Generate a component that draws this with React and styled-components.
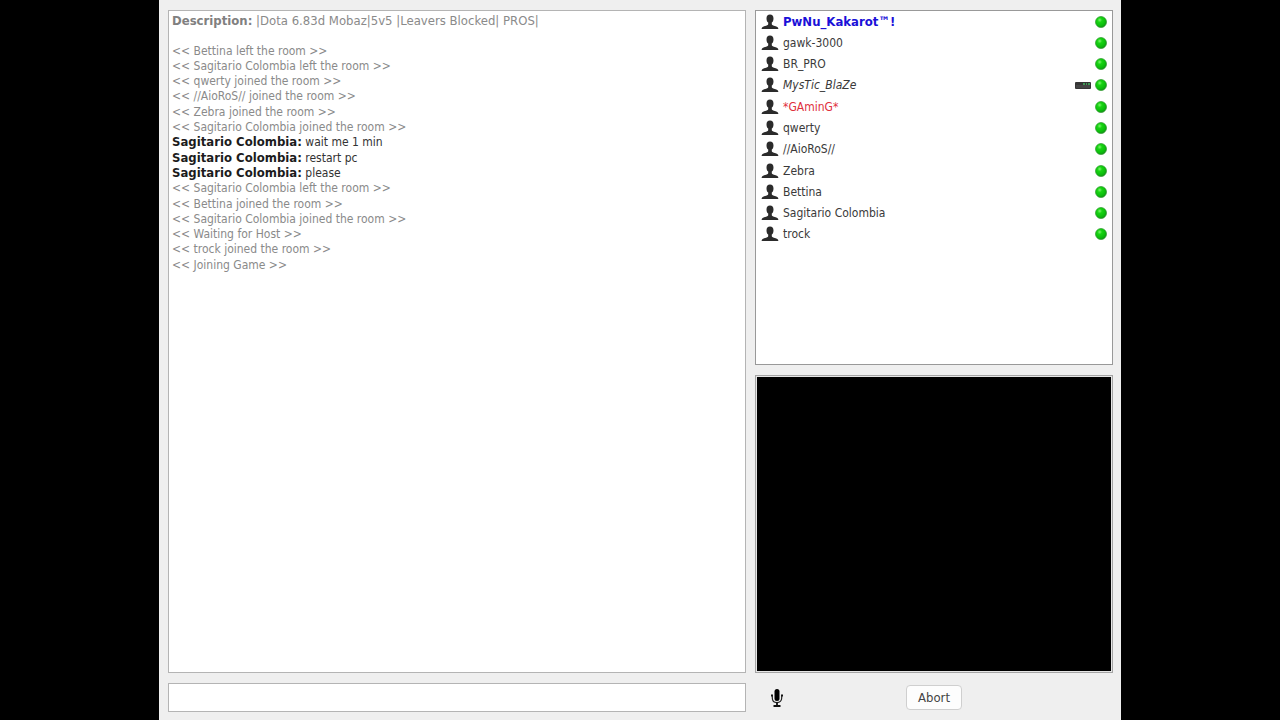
import React, { useState } from 'react'
import styled, { createGlobalStyle } from 'styled-components';

const GlobalStyle = createGlobalStyle`
* {
  box-sizing: border-box;
}
body {
  margin: 0;
  background: #000;
  color: #333;
  font-family: "DejaVu Sans Condensed", "DejaVu Sans", sans-serif;
  font-size: 12px;
}
`;

const Window = styled.div`
min-height: 100vh;
margin: 0 159px;
padding: 10px 8px 8px 9px;
background-color: #efefef;
display: grid;
grid-template-columns: 578fr 358fr;
grid-template-rows: 1fr 29px;
gap: 10px 9px;
`;

const Log = styled.main`
padding: 2px 3px;
background-color: white;
border: 1px solid #b4b4b4;
`;

const Lines = styled.div`
display: grid;
grid-auto-rows: 1fr;
height: 260px;
`;

const Line = styled.p`
margin: 0;
line-height: 15px;
white-space: pre;
font-size: ${props => props.$heading ? "13px" : "12px"};
color: ${props => props.$notice ? "#8a8a8a" : "#333"};
`;

const Author = styled.b`
font-size: 13px;
line-height: 1;
color: ${props => props.$muted ? "#808080" : "#1c1c1c"};
`;

const Side = styled.aside`
display: grid;
grid-template-rows: 355fr 298fr;
gap: 10px;
`;

const Users = styled.section`
padding: 0 5px;
background-color: white;
border: 1px solid #999;
`;

const UserList = styled.ul`
display: grid;
grid-auto-rows: 1fr;
height: 234px;
margin: 0;
padding: 0;
list-style: none;
`;

const User = styled.li`
display: flex;
align-items: center;
gap: 4px;
`;

const Name = styled.span`
flex: 1;
line-height: 20px;
color: ${props => props.$color || "#3a3a3a"};
font-size: ${props => props.$bold ? "13px" : "12px"};
font-weight: ${props => props.$bold ? 700 : 400};
font-style: ${props => props.$italic ? "italic" : "normal"};
`;

const Ad = styled.div`
background-color: black;
border: 1px solid #a5a5a5;
box-shadow: inset 0 0 0 1px #e6e6e6;
`;

const MessageInput = styled.input`
width: 100%;
padding: 0 4px;
font: inherit;
background-color: white;
border: 1px solid #b4b4b4;
outline: none;
`;

const Controls = styled.div`
display: grid;
grid-template-columns: 1fr auto 1fr;
align-items: center;
`;

const MicButton = styled.button`
justify-self: start;
display: flex;
margin-left: 15px;
padding: 0;
background: none;
border: none;
cursor: pointer;
`;

const AbortButton = styled.button`
width: 56px;
height: 25px;
padding: 0;
font-family: inherit;
font-size: 13px;
color: #444;
background-color: #fdfdfd;
border: 1px solid #cfcfcf;
border-radius: 4px;
cursor: pointer;
`;

const PersonIcon = () => (
  <svg width="18" height="16" viewBox="0 0 18 16" aria-hidden="true">
    <path fill="#2b2b2b" d="M9 .5C6.700 .5 5.500 2.200 5.500 4.400c0 1.800.6 3.300 1.700 4.200v1.600c-.4 1-1.600 1.300-3.100 1.700C2 12.500.8 13 .6 15h16.800c-.2-2-1.400-2.500-3.500-3.100-1.500-.4-2.700-.7-3.100-1.700V8.600c1.100-.9 1.700-2.400 1.700-4.200C12.500 2.200 11.300 .5 9 .5z" />
  </svg>
);

const StatusIcon = () => (
  <svg width="12" height="12" viewBox="0 0 12 12" role="img" aria-label="online">
    <defs>
      <radialGradient id="online" cx="38%" cy="32%" r="70%">
        <stop offset="0" stopColor="#7df46c" />
        <stop offset="0.3" stopColor="#18d413" />
        <stop offset="0.75" stopColor="#0cbc0c" />
        <stop offset="1" stopColor="#159019" />
      </radialGradient>
    </defs>
    <circle cx="6" cy="6" r="5.500" fill="url(#online)" stroke="#2c9a2c" strokeWidth="0.7" />
  </svg>
);

const HostIcon = () => (
  <svg width="16" height="8" viewBox="0 0 16 8" role="img" aria-label="host">
    <rect y="1" width="16" height="7" rx="1" fill="#353535" />
    <rect x="1" y="4" width="14" height="3" fill="#444" />
    <path fill="#3f9a55" d="M8 2h2v2H8zM11 2h1v2h-1zM13 2h2v2h-2z" />
  </svg>
);

const MicIcon = () => (
  <svg width="14" height="18" viewBox="0 0 14 18" aria-hidden="true">
    <rect x="4.500" y="0" width="5" height="12" rx="2.500" fill="#000" />
    <path d="M1 6.500h2" stroke="#111" strokeWidth="2" />
    <path d="M11 6.500h2" stroke="#111" strokeWidth="2" />
    <path d="M2.300 6.500V9c0 3 2 4.600 4.700 4.600s4.700-1.600 4.700-4.600V6.500" fill="none" stroke="#222" strokeWidth="1.200" />
    <path d="M7 13.500v3M3.500 17h7" stroke="#111" strokeWidth="1.800" />
  </svg>
);

const lines = [
  { author: "Description:", text: "|Dota 6.83d Mobaz|5v5 |Leavers Blocked| PROS|", notice: true, heading: true },
  { text: " ", notice: true },
  { text: "<< Bettina left the room >>", notice: true },
  { text: "<< Sagitario Colombia left the room >>", notice: true },
  { text: "<< qwerty joined the room >>", notice: true },
  { text: "<< //AioRoS// joined the room >>", notice: true },
  { text: "<< Zebra joined the room >>", notice: true },
  { text: "<< Sagitario Colombia joined the room >>", notice: true },
  { author: "Sagitario Colombia:", text: "wait me 1 min" },
  { author: "Sagitario Colombia:", text: "restart pc" },
  { author: "Sagitario Colombia:", text: "please" },
  { text: "<< Sagitario Colombia left the room >>", notice: true },
  { text: "<< Bettina joined the room >>", notice: true },
  { text: "<< Sagitario Colombia joined the room >>", notice: true },
  { text: "<< Waiting for Host >>", notice: true },
  { text: "<< trock joined the room >>", notice: true },
  { text: "<< Joining Game >>", notice: true },
];

const users = [
  { name: "PwNu_Kakarot™!", color: "#1a10d8", bold: true },
  { name: "gawk-3000" },
  { name: "BR_PRO" },
  { name: "MysTic_BlaZe", italic: true, host: true },
  { name: "*GAminG*", color: "#e0303c" },
  { name: "qwerty" },
  { name: "//AioRoS//" },
  { name: "Zebra" },
  { name: "Bettina" },
  { name: "Sagitario Colombia" },
  { name: "trock" },
];

const App = () => {

  const [message, setMessage] = useState("");

  return (
    <>
      <GlobalStyle />
      <Window>
        <Log>
          <Lines>
            {lines.map((line, i) => (
              <Line key={i} $notice={line.notice} $heading={line.heading}>
                {line.author && <><Author $muted={line.notice}>{line.author}</Author>{" "}</>}
                {line.text}
              </Line>
            ))}
          </Lines>
        </Log>
        <Side>
          <Users>
            <UserList>
              {users.map((user) => (
                <User key={user.name}>
                  <PersonIcon />
                  <Name $color={user.color} $bold={user.bold} $italic={user.italic}>{user.name}</Name>
                  {user.host && <HostIcon />}
                  <StatusIcon />
                </User>
              ))}
            </UserList>
          </Users>
          <Ad />
        </Side>
        <MessageInput aria-label="Message" value={message} onChange={(e) => setMessage(e.target.value)} />
        <Controls>
          <MicButton aria-label="Microphone"><MicIcon /></MicButton>
          <AbortButton>Abort</AbortButton>
        </Controls>
      </Window>
    </>
  )
}

export default App;
